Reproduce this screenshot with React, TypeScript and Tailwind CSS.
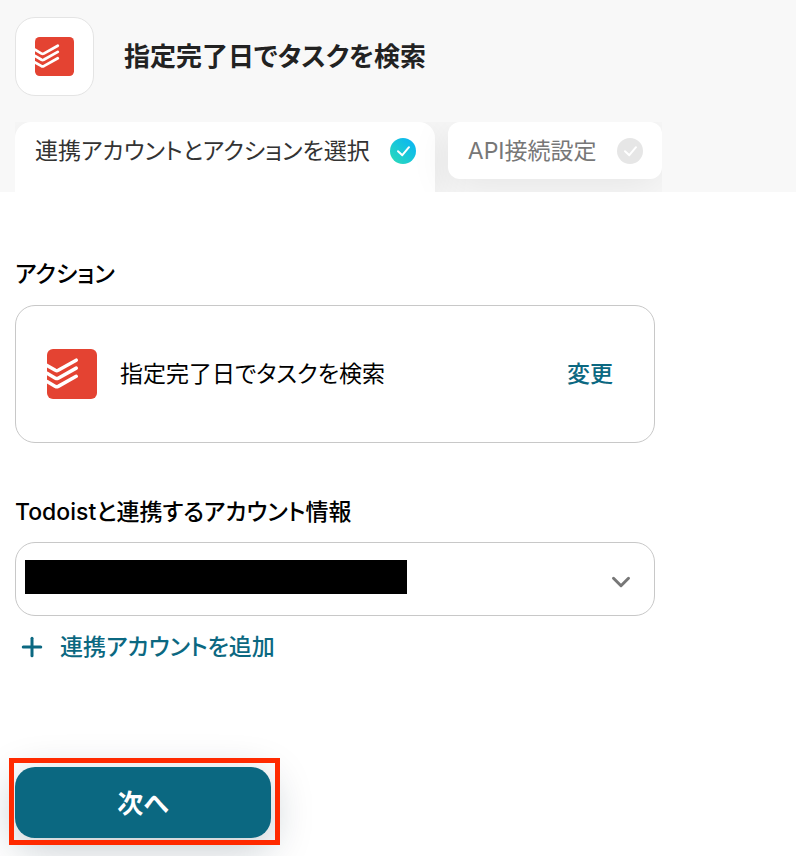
import React, { useState } from 'react';
import { ChevronDown, Plus } from 'lucide-react';

type Step = 'account' | 'api';

const TodoistIcon: React.FC<{ className?: string }> = ({ className }) => (
  <svg viewBox="0 0 50 50" className={className} aria-hidden="true">
    <rect width="50" height="50" rx="6" fill="#e44332" />
    <g fill="none" stroke="#fff" strokeWidth="3.5" strokeLinecap="round" strokeLinejoin="round">
      <path d="M0 16.4 8.4 21.3Q9.8 22 11.2 21.3L29.2 11.2" />
      <path d="M0 24.3 8.4 29.2Q9.8 29.9 11.2 29.2L29.2 19.1" />
      <path d="M0 32.5 8.4 37.4Q9.8 38.1 11.2 37.4L29.2 27.3" />
    </g>
    <path d="M-3 0H0V50H-3Z" fill="#fff" />
  </svg>
);

const CheckBadge: React.FC<{ done: boolean }> = ({ done }) => (
  <span
    className={`flex size-[26px] shrink-0 items-center justify-center rounded-full ${
      done ? 'bg-linear-to-tr from-[#2fdcb4] to-[#0fb0f8]' : 'bg-[#e6e6e6]'
    }`}
  >
    <svg viewBox="0 0 26 26" className="size-full" fill="none" stroke="#fff" strokeWidth="2" strokeLinecap="round" strokeLinejoin="round" aria-hidden="true">
      <path d="M8 13.2 12.3 17.2 19 9.2" />
    </svg>
  </span>
);

const App: React.FC = () => {
  const [step, setStep] = useState<Step>('account');

  return (
    <div className="bg-white pb-[18px] font-['Inter','Noto_Sans_CJK_JP',sans-serif] text-[23px] leading-8 text-black [font-feature-settings:'palt']">
      {/* Header */}
      <header className="bg-[#f8f8f8] px-[15px] pt-[17px]">
        <div className="flex items-center gap-[30px]">
          <div className="flex size-[79px] shrink-0 items-center justify-center rounded-[20px] border border-[#e4e4e4] bg-white">
            <TodoistIcon className="size-[39px]" />
          </div>
          <h1 className="text-[26px] font-bold text-[#222]">指定完了日でタスクを検索</h1>
        </div>

        {/* Steps */}
        <nav className="mt-[26px] flex h-[70px] w-fit items-start gap-[13px] overflow-hidden">
          <button
            type="button"
            onClick={() => setStep('account')}
            aria-current={step === 'account' ? 'step' : undefined}
            className="flex h-[70px] items-start gap-5 rounded-t-2xl bg-white pt-[13px] pr-[19px] pl-5 text-[#333] shadow-[0_8px_40px_rgba(0,0,0,0.08)]"
          >
            <span>連携アカウントとアクションを選択</span>
            <span className="py-[3px]"><CheckBadge done /></span>
          </button>
          <button
            type="button"
            onClick={() => setStep('api')}
            aria-current={step === 'api' ? 'step' : undefined}
            className="flex h-[57px] items-center gap-5 rounded-xl bg-white pr-[19px] pl-5 text-[#777] shadow-[0_8px_40px_rgba(0,0,0,0.08)]"
          >
            <span>API接続設定</span>
            <CheckBadge done={false} />
          </button>
        </nav>
      </header>

      <main className="px-[15px] pt-[66px]">
        <div className="max-w-[640px]">
          {/* Action */}
          <h2 className="font-medium">アクション</h2>
          <div className="mt-[15px] flex h-[138px] items-center gap-[23px] rounded-[20px] border border-[#c8c8c8] pr-[41px] pl-[31px]">
            <TodoistIcon className="size-[50px] shrink-0" />
            <p className="flex-1">指定完了日でタスクを検索</p>
            <button type="button" className="font-medium text-[#0b6881]">変更</button>
          </div>

          {/* Account */}
          <label htmlFor="account" className="mt-[53px] block font-medium">
            Todoistと連携するアカウント情報
          </label>
          <div className="relative mt-[14px]">
            <select id="account" className="block h-[74px] w-full appearance-none rounded-[20px] border border-[#c8c8c8] bg-white px-5">
              <option aria-label="account" value="" />
            </select>
            <div className="pointer-events-none absolute inset-y-0 left-[10px] my-[18px] h-[34px] w-3/5 max-w-[382px] bg-black" />
            <ChevronDown className="pointer-events-none absolute top-[25px] right-[19px] size-[30px] text-[#777]" strokeWidth={2.4} />
          </div>
          <button type="button" className="mt-[15px] flex items-center gap-[13px] pl-[2px] text-[#0b6881]">
            <Plus className="size-[30px]" strokeWidth={2.4} />
            <span className="font-medium">連携アカウントを追加</span>
          </button>

          {/* Submit */}
          <div className="relative mt-[104px] w-64">
            <button type="button" className="block h-[71px] w-full rounded-[20px] bg-[#0b6881] pt-[2px] text-[26px] font-bold text-white shadow-[0_10px_40px_rgba(10,40,60,0.25)]">
              次へ
            </button>
            <div className="pointer-events-none absolute -top-[9px] -right-[9px] -bottom-[7px] -left-[6px] border-5 border-[#ff2a00]" />
          </div>
        </div>
      </main>
    </div>
  );
};

export default App;
